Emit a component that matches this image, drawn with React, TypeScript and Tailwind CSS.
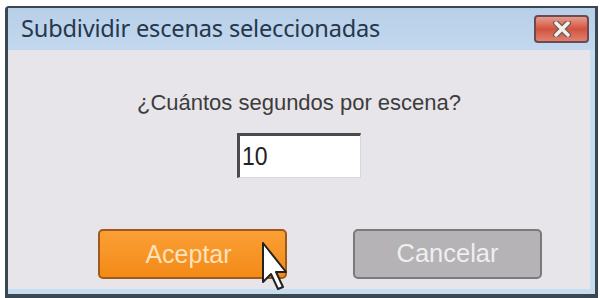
import React from "react";

const CloseButton = () => (
  <div className="w-[55px] h-[28px] rounded-[4px] border-2 border-[#6b4a52] bg-gradient-to-b from-[#e79a8c] via-[#d2533f] to-[#e0806c] flex items-center justify-center">
    <svg width="22" height="16" viewBox="0 0 22 16">
      <path d="M5 2 L17 14 M17 2 L5 14" stroke="#6d5a5a" strokeWidth="6" strokeLinecap="round" />
      <path d="M5 2 L17 14 M17 2 L5 14" stroke="#f4f0ee" strokeWidth="3.5" strokeLinecap="round" />
    </svg>
  </div>
);

const Cursor = () => (
  <svg className="absolute left-[261px] top-[242px]" width="28" height="50" viewBox="0 0 28 50">
    <path
      d="M2 1 L2 40 L10 32 L17 47 L22 45 L15 30 L25 30 Z"
      fill="#ffffff"
      stroke="#222"
      strokeWidth="2"
      strokeLinejoin="round"
    />
  </svg>
);

export default function App() {
  return (
    <div className="relative w-[600px] h-[298px] bg-white overflow-hidden">
      <div className="ml-[5px] mt-[6px] w-[593px] h-[292px] border-l-[3px] border-t-[2px] border-b-[4px] border-r-[3px] border-[#3a4650] rounded-tl-[4px] flex flex-col">
        <div className="h-[42px] bg-gradient-to-b from-[#b7cfe8] to-[#c3d8ee] flex items-center justify-between pl-[13px] pr-[6px]">
          <span className="text-[23.6px] text-[#26374c] font-['Noto_Sans',sans-serif] tracking-[-0.2px] leading-none pb-[1px]">
            Subdividir escenas seleccionadas
          </span>
          <CloseButton />
        </div>
        <div className="flex-1 flex">
          <div className="flex-1 bg-[#e7e5e9] flex flex-col items-center pt-[42px]">
            <p className="text-[22px] text-[#3c3c3c] font-['Liberation_Sans',Arial,sans-serif] leading-none">
              ¿Cuántos segundos por escena?
            </p>
            <div className="mt-[19px] w-[124px] h-[45px] bg-white border-l-[3px] border-t-[3px] border-[#4a4a4a] border-r border-b border-r-[#d8d8d8] border-b-[#d8d8d8] flex items-center pl-[2px]">
              <span className="text-[23px] text-[#222] font-['Liberation_Sans',Arial,sans-serif] leading-none scale-y-110">10</span>
            </div>
            <div className="mt-[51px] w-full flex justify-between pl-[90px] pr-[48px]">
              <div className="w-[189px] h-[50px] rounded-[5px] border-2 border-[#9d5a1c] bg-gradient-to-b from-[#fb9f35] to-[#f38a14] flex items-center justify-center pr-[8px]">
                <span className="text-[25px] text-[#fde2ba] font-['Liberation_Sans',Arial,sans-serif] leading-none">Aceptar</span>
              </div>
              <div className="w-[189px] h-[50px] rounded-[5px] border-2 border-[#7b797c] bg-[#b5b3b6] flex items-center justify-center">
                <span className="text-[25.5px] text-[#efefef] font-['Liberation_Sans',Arial,sans-serif] leading-none">Cancelar</span>
              </div>
            </div>
          </div>
          <div className="w-[5px] bg-[#c6dcef]" />
        </div>
        <div className="h-[5px] bg-[#c6dcef]" />
      </div>
      <Cursor />
    </div>
  );
}
